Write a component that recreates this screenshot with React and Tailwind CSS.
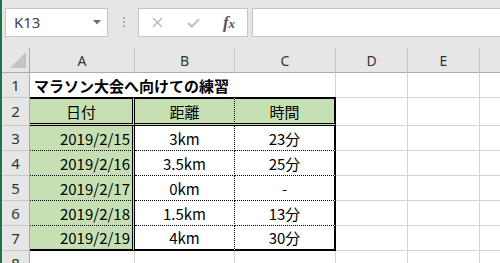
import React from "react";

const jp = { fontFamily: '"Noto Sans CJK JP", "Noto Sans", sans-serif' };
const ui = { fontFamily: '"Noto Sans", "Liberation Sans", sans-serif' };

function ColHead({ children, last }) {
  return (
    <div
      className={
        last
          ? "flex items-center justify-center bg-[#E6E6E6] border-b border-b-[#ABABAB] text-[14px] text-[#333]"
          : "flex items-center justify-center bg-[#E6E6E6] border-b border-b-[#ABABAB] border-r border-r-[#C8C8C8] text-[14px] text-[#333]"
      }
      style={ui}
    >
      {children}
    </div>
  );
}

function RowHead({ n }) {
  return (
    <div
      className="flex items-center justify-center bg-[#E6E6E6] border-r border-r-[#ABABAB] border-b border-b-[#C8C8C8] text-[15px] text-[#333] overflow-hidden"
      style={ui}
    >
      {n}
    </div>
  );
}

function Blank() {
  return <div className="bg-white border-r border-b border-[#D4D4D4]" />;
}

function BlankLast() {
  return <div className="bg-white border-b border-[#D4D4D4]" />;
}

const rows = [
  ["2019/2/15", "3km", "23分"],
  ["2019/2/16", "3.5km", "25分"],
  ["2019/2/17", "0km", "-"],
  ["2019/2/18", "1.5km", "13分"],
  ["2019/2/19", "4km", "30分"],
];

export default function App() {
  return (
    <div className="flex h-[263px] w-[500px] overflow-hidden bg-[#E6E6E6]">
      <div className="w-[2px] shrink-0 bg-[#217346]" />
      <div className="flex min-w-0 flex-1 flex-col">
        {/* Toolbar */}
        <div className="flex h-[48px] shrink-0 items-start pl-[3px] pt-[8px]">
          <div className="flex h-[29px] w-[103px] items-center justify-between border border-[#C6C6C6] bg-white pl-[8px] pr-[6px]">
            <span className="text-[15px] text-[#444]" style={ui}>
              K13
            </span>
            <svg width="8" height="5" viewBox="0 0 8 5">
              <path d="M0 0 H8 L4 4.5 Z" fill="#707070" />
            </svg>
          </div>
          <div className="ml-[14px] mt-[9px] flex w-[3px] flex-col items-center gap-[2px]">
            <div className="h-[2px] w-[2px] bg-[#ABABAB]" />
            <div className="h-[2px] w-[2px] bg-[#ABABAB]" />
            <div className="h-[2px] w-[2px] bg-[#ABABAB]" />
          </div>
          <div className="ml-[13px] flex h-[29px] w-[110px] items-center border border-[#C6C6C6] bg-white">
            <div className="flex w-[36px] items-center justify-center">
              <svg width="11" height="11" viewBox="0 0 11 11">
                <path d="M1 1 L10 10 M10 1 L1 10" stroke="#B4B4B4" strokeWidth="1.3" />
              </svg>
            </div>
            <div className="flex w-[36px] items-center justify-center">
              <svg width="13" height="10" viewBox="0 0 13 10">
                <path d="M1 5 L4.8 8.6 L12 1.2" stroke="#BDBDBD" strokeWidth="2" fill="none" />
              </svg>
            </div>
            <div className="flex w-[36px] items-center justify-center">
              <span
                className="text-[17px] font-bold italic leading-none text-[#555]"
                style={{ fontFamily: '"Liberation Serif", "DejaVu Serif", serif' }}
              >
                f<span className="text-[13px]">x</span>
              </span>
            </div>
          </div>
          <div className="ml-[4px] h-[29px] flex-1 border border-r-0 border-[#C6C6C6] bg-white" />
        </div>

        {/* Sheet */}
        <div className="grid grid-cols-[28px_105px_100px_101px_72px_72px_1fr] grid-rows-[25px_25px_28px_25px_25px_25px_25px_25px_25px]">
          {/* header row */}
          <div className="relative border-b border-r border-b-[#ABABAB] border-r-[#ABABAB] bg-[#E6E6E6]">
            <svg className="absolute left-[8px] top-[4px]" width="17" height="17" viewBox="0 0 17 17">
              <path d="M16 0 V16 H0 Z" fill="#C4C4C4" />
            </svg>
          </div>
          <ColHead>A</ColHead>
          <ColHead>B</ColHead>
          <ColHead>C</ColHead>
          <ColHead>D</ColHead>
          <ColHead>E</ColHead>
          <ColHead last />

          {/* row 1 */}
          <RowHead n="1" />
          <div
            className="col-span-2 flex items-center whitespace-nowrap border-b border-[#D4D4D4] bg-white pl-[4px] text-[15px] font-bold leading-none text-black"
            style={jp}
          >
            マラソン大会へ向けての練習
          </div>
          <Blank />
          <Blank />
          <Blank />
          <BlankLast />

          {/* row 2 */}
          <RowHead n="2" />
          <div
            className="-mt-px flex items-center justify-center border-t-2 border-b-[3px] border-r-[3px] border-black bg-[#C6E0B4] text-[15px] leading-none text-black [border-bottom-style:double] [border-right-style:double]"
            style={jp}
          >
            日付
          </div>
          <div
            className="-mt-px flex items-center justify-center border-t-2 border-b-[3px] border-r border-black bg-[#C6E0B4] text-[15px] leading-none text-black [border-bottom-style:double] [border-right-style:dotted]"
            style={jp}
          >
            距離
          </div>
          <div
            className="-mt-px flex items-center justify-center border-t-2 border-b-[3px] border-r-2 border-black bg-[#C6E0B4] text-[15px] leading-none text-black [border-bottom-style:double]"
            style={jp}
          >
            時間
          </div>
          <Blank />
          <Blank />
          <BlankLast />

          {rows.map((r, i) => {
            const last = i === rows.length - 1;
            return (
              <React.Fragment key={i}>
                <RowHead n={String(i + 3)} />
                <div
                  className={
                    last
                      ? "flex items-center justify-end border-b-2 border-r-[3px] border-black bg-[#C6E0B4] pr-[2px] text-[15px] leading-none text-black [border-right-style:double]"
                      : "flex items-center justify-end border-b border-r-[3px] border-black bg-[#C6E0B4] pr-[2px] text-[15px] leading-none text-black [border-bottom-style:dotted] [border-right-style:double]"
                  }
                  style={jp}
                >
                  {r[0]}
                </div>
                <div
                  className={
                    last
                      ? "flex items-center justify-center border-b-2 border-r border-black bg-white text-[15px] leading-none text-black [border-right-style:dotted]"
                      : "flex items-center justify-center border-b border-r border-black bg-white text-[15px] leading-none text-black [border-bottom-style:dotted] [border-right-style:dotted]"
                  }
                  style={jp}
                >
                  {r[1]}
                </div>
                <div
                  className={
                    last
                      ? "flex items-center justify-center border-b-2 border-r-2 border-black bg-white text-[15px] leading-none text-black"
                      : "flex items-center justify-center border-b border-r-2 border-black bg-white text-[15px] leading-none text-black [border-bottom-style:dotted]"
                  }
                  style={jp}
                >
                  {r[2]}
                </div>
                <Blank />
                <Blank />
                <BlankLast />
              </React.Fragment>
            );
          })}

          {/* row 8 */}
          <RowHead n="8" />
          <Blank />
          <Blank />
          <Blank />
          <Blank />
          <Blank />
          <BlankLast />
        </div>
      </div>
    </div>
  );
}
